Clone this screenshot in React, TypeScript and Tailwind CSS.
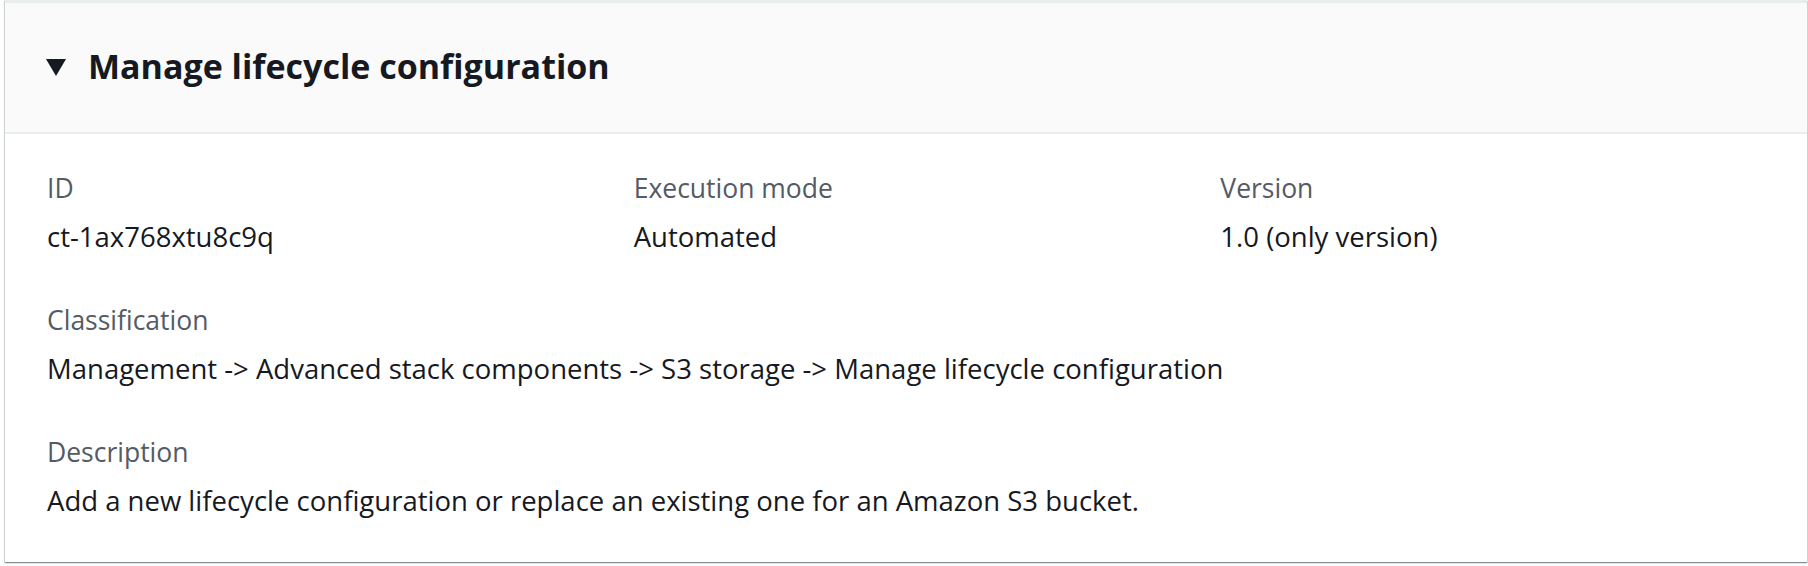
const rows: { label: string; value: string }[][] = [
  [
    { label: "ID", value: "ct-1ax768xtu8c9q" },
    { label: "Execution mode", value: "Automated" },
    { label: "Version", value: "1.0 (only version)" },
  ],
  [
    {
      label: "Classification",
      value: "Management -> Advanced stack components -> S3 storage -> Manage lifecycle configuration",
    },
  ],
  [
    {
      label: "Description",
      value: "Add a new lifecycle configuration or replace an existing one for an Amazon S3 bucket.",
    },
  ],
]

function Field({ label, value }: { label: string; value: string }) {
  return (
    <div>
      <div className="text-[26.5px] leading-[40px] text-[#545b64] whitespace-nowrap">{label}</div>
      <div className="mt-[9px] text-[27.5px] leading-[40px] text-[#16191f] whitespace-nowrap">{value}</div>
    </div>
  )
}

export default function App() {
  return (
    <div className="w-[1808px] h-[566px] bg-white pl-[5px] pr-[1px] font-['Open_Sans',sans-serif]">
      <div className="bg-white border-t-[3px] border-[#eaeded] shadow-[0_1px_1px_0_rgba(0,28,36,0.3),1px_1px_1px_0_rgba(0,28,36,0.15),-1px_1px_1px_0_rgba(0,28,36,0.15)]">
        <div className="h-[131px] bg-[#fafafa] border-b-2 border-[#eaeded] flex items-center pl-[41px]">
          <svg width="20" height="17" viewBox="0 0 20 17" className="shrink-0">
            <path d="M0 0 H20 L10 17 Z" fill="#16191f" />
          </svg>
          <h2 className="ml-[22px] mb-[4px] text-[34px] font-bold text-[#16191f] leading-none">
            Manage lifecycle configuration
          </h2>
        </div>
        <div className="px-[42px] pt-[34px] pb-[41px] flex flex-col gap-[43px]">
          {rows.map((row, i) =>
            row.length > 1 ? (
              <div key={i} className="grid grid-cols-3 gap-x-[42px]">
                {row.map((f) => (
                  <Field key={f.label} {...f} />
                ))}
              </div>
            ) : (
              <Field key={i} {...row[0]} />
            )
          )}
        </div>
      </div>
    </div>
  )
}
